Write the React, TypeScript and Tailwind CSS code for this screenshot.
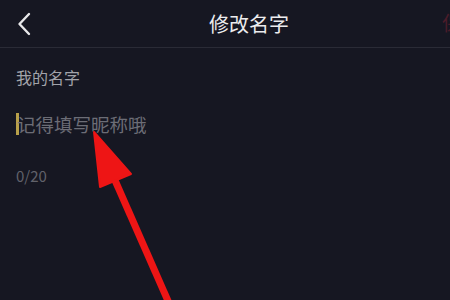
import React from 'react';

export default function App() {
  return (
    <div
      className="relative h-[300px] w-[450px] overflow-hidden bg-[#161722]"
      style={{ fontFamily: '"Noto Sans CJK SC", "Liberation Sans", sans-serif' }}
    >
      {/* header */}
      <header className="flex h-[48px] items-center border-b border-[#2a2b36]">
        <div className="flex w-[48px] items-center pl-[17px]">
          <svg width="14" height="24" viewBox="0 0 14 24" fill="none">
            <path d="M12 2 L2.5 12 L12 22" stroke="#e8e8ea" strokeWidth="2.4" strokeLinecap="round" strokeLinejoin="round" />
          </svg>
        </div>
        <div className="flex flex-1 justify-center pl-[48px]">
          <span className="text-[20px] leading-none text-[#ececee]">修改名字</span>
        </div>
        <div className="w-[48px] whitespace-nowrap text-right">
          <span className="mr-[-32px] text-[20px] leading-none text-[#4a1c2a]">保存</span>
        </div>
      </header>

      <main className="flex flex-col px-[16px]">
        <p className="mt-[19px] text-[16px] leading-[20px] text-[#a2a3aa]">我的名字</p>

        <div className="mt-[25px] flex h-[24px] items-center">
          <span className="h-[22px] w-[3px] bg-[#b8a04a]" />
          <span className="-ml-[2px] text-[18.5px] leading-none text-[#6c6d76]">记得填写昵称哦</span>
        </div>

        <p className="mt-[31px] text-[15px] leading-[18px] text-[#61626b]">0/20</p>
      </main>

      {/* annotation arrow */}
      <svg className="pointer-events-none absolute left-0 top-0" width="450" height="300" viewBox="0 0 450 300">
        <line x1="114" y1="178" x2="172" y2="310" stroke="#ee1515" strokeWidth="7" />
        <polygon points="94,132 100,187 131,174" fill="#ee1515" stroke="#ee1515" strokeWidth="2" strokeLinejoin="round" />
      </svg>
    </div>
  );
}
